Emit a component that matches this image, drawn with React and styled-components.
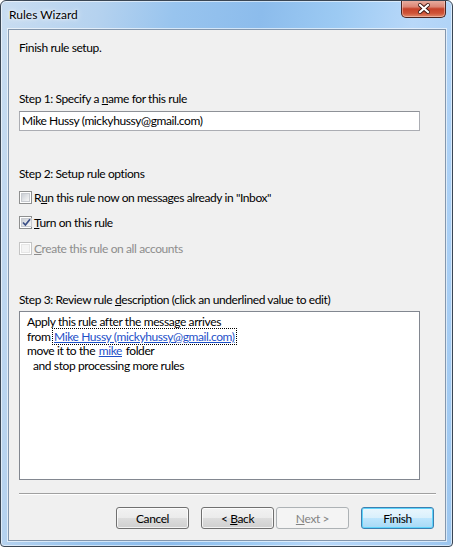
import React from "react";
import styled, { createGlobalStyle } from "styled-components";

const GlobalStyle = createGlobalStyle`
  html, body {
    margin: 0;
    padding: 0;
    background: #ffffff;
  }
  * {
    box-sizing: border-box;
  }
`;

const Window = styled.div`
  width: 453px;
  height: 547px;
  display: flex;
  flex-direction: column;
  border: 1px solid #3a4654;
  border-radius: 6px 6px 4px 4px;
  background: linear-gradient(
    100deg,
    #c9ddf1 0%,
    #b5d2ef 18%,
    #98c4ee 32%,
    #8cbcec 48%,
    #9ccaf3 62%,
    #b8d8f9 76%,
    #a9cff5 90%,
    #9cc6ef 100%
  );
  box-shadow: inset 0 0 0 1px rgba(255, 255, 255, 0.55);
  font-family: Lato, "Liberation Sans", sans-serif;
  font-size: 12px;
  letter-spacing: -0.4px;
  color: #000;
  overflow: hidden;
`;

const TitleBar = styled.div`
  height: 28px;
  flex: none;
  display: flex;
  justify-content: space-between;
  align-items: flex-start;
  padding-left: 8px;
`;

const Title = styled.div`
  line-height: 28px;
  letter-spacing: 0;
  text-shadow: 0 0 6px rgba(255, 255, 255, 0.95), 0 0 3px rgba(255, 255, 255, 0.9);
`;

const CloseButton = styled.div`
  width: 45px;
  height: 18px;
  margin-right: 6px;
  margin-top: -1px;
  display: flex;
  align-items: center;
  justify-content: center;
  border: 1px solid #4b2520;
  border-top: none;
  border-radius: 0 0 5px 5px;
  background: linear-gradient(
    #e9b1a4 0%,
    #dc8675 40%,
    #c6422a 52%,
    #cf5438 78%,
    #e08a6c 100%
  );
  box-shadow: inset 0 0 0 1px rgba(255, 220, 210, 0.45);
`;

const Client = styled.div`
  flex: 1;
  margin: 0 6px 5px 7px;
  display: flex;
  flex-direction: column;
  border: 1px solid #8497ad;
  background: #f0f0f0;
  padding: 10px 11px 0 10px;
  box-shadow: 0 0 0 1px rgba(255, 255, 255, 0.6);
`;

const Line = styled.div`
  line-height: 15px;
  height: 15px;
  white-space: nowrap;
  margin-top: ${(p) => p.$top || 0}px;
`;

const U = styled.span`
  text-decoration: underline;
`;

const TextBox = styled.div`
  margin-top: 5px;
  width: 401px;
  height: 20px;
  border: 1px solid #abadb3;
  border-top-color: #8e9197;
  background: #fff;
  padding-left: 2px;
  line-height: 18px;
  white-space: nowrap;
`;

const Options = styled.div`
  margin-top: 8px;
  display: flex;
  flex-direction: column;
  gap: 9.5px;
`;

const CheckRow = styled.div`
  height: 16px;
  display: flex;
  align-items: center;
  gap: 2px;
  color: ${(p) => (p.$disabled ? "#8d8d8d" : "#000")};
  white-space: nowrap;
`;

const Box = styled.div`
  width: 13px;
  height: 13px;
  flex: none;
  border: 1px solid ${(p) => (p.$disabled ? "#c4c4c4" : "#8e8f8f")};
  background: #fff;
  padding: 1px;
  display: flex;
`;

const BoxInner = styled.div`
  flex: 1;
  display: flex;
  align-items: center;
  justify-content: center;
  background: ${(p) =>
    p.$disabled
      ? "#f4f4f4"
      : "linear-gradient(135deg, #cbcfd5 0%, #e4e6e9 55%, #f6f6f6 100%)"};
  border: 1px solid ${(p) => (p.$disabled ? "#e6e6e6" : "#c8cbd0")};
`;

const Description = styled.div`
  margin-top: 4px;
  width: 401px;
  height: 169px;
  border: 1px solid #828790;
  background: #fff;
  padding: 3px 0 0 7px;
`;

const DescLine = styled.div`
  height: 14.7px;
  line-height: 14.7px;
  white-space: nowrap;
  padding-left: ${(p) => p.$indent || 0}px;
`;

const Link = styled.span`
  color: #1e50c8;
  text-decoration: underline;
  outline: ${(p) => (p.$focused ? "1px dotted #000" : "none")};
  outline-offset: 0;
  padding: 0 1px;
`;

const Separator = styled.div`
  margin-top: 13px;
  height: 1px;
  width: 417px;
  background: #a0a0a0;
  box-shadow: 0 1px 0 #ffffff;
`;

const ButtonRow = styled.div`
  margin-top: 13px;
  display: flex;
  justify-content: flex-end;
  align-items: center;
`;

const Button = styled.div`
  width: 73px;
  height: 22px;
  margin-left: ${(p) => p.$gap ?? 12}px;
  display: flex;
  align-items: center;
  justify-content: center;
  border-radius: 3px;
  border: 1px solid ${(p) =>
    p.$disabled ? "#adb2b5" : p.$default ? "#3c7fb1" : "#707070"};
  background: ${(p) =>
    p.$disabled
      ? "#f4f4f4"
      : p.$default
      ? "linear-gradient(#eaf6fd 0%, #d9f0fc 50%, #bee6fd 51%, #a7d9f5 100%)"
      : "linear-gradient(#f2f2f2 0%, #ebebeb 50%, #dddddd 51%, #cfcfcf 100%)"};
  box-shadow: ${(p) =>
    p.$disabled
      ? "none"
      : p.$default
      ? "inset 0 0 0 1px #5fd4fb"
      : "inset 0 0 0 1px rgba(255, 255, 255, 0.75)"};
  color: ${(p) => (p.$disabled ? "#838383" : "#000")};
  white-space: pre;
`;

function CloseGlyph() {
  return (
    <svg width="14" height="11" viewBox="0 0 14 11">
      <path
        d="M3 2 L11 9 M11 2 L3 9"
        stroke="#3d1712"
        strokeWidth="4"
        strokeLinecap="round"
        fill="none"
      />
      <path
        d="M3 2 L11 9 M11 2 L3 9"
        stroke="#ffffff"
        strokeWidth="2.2"
        strokeLinecap="square"
        fill="none"
      />
    </svg>
  );
}

function CheckBox({ checked, disabled }) {
  return (
    <Box $disabled={disabled}>
      <BoxInner $disabled={disabled}>
        {checked && (
          <svg width="9" height="9" viewBox="0 0 9 9">
            <path
              d="M1 4.5 L3.4 7 L8 1.2"
              stroke="#3b4f86"
              strokeWidth="1.7"
              fill="none"
            />
          </svg>
        )}
      </BoxInner>
    </Box>
  );
}

export default function App() {
  return (
    <>
      <GlobalStyle />
      <Window>
        <TitleBar>
          <Title>Rules Wizard</Title>
          <CloseButton>
            <CloseGlyph />
          </CloseButton>
        </TitleBar>
        <Client>
          <Line>Finish rule setup.</Line>

          <Line $top={36}>
            Step 1: Specify a <U>n</U>ame for this rule
          </Line>
          <TextBox>Mike Hussy (mickyhussy@gmail.com)</TextBox>

          <Line $top={35}>Step 2: Setup rule options</Line>
          <Options>
            <CheckRow>
              <CheckBox />
              <span>
                R<U>u</U>n this rule now on messages already in "Inbox"
              </span>
            </CheckRow>
            <CheckRow>
              <CheckBox checked />
              <span>
                <U>T</U>urn on this rule
              </span>
            </CheckRow>
            <CheckRow $disabled>
              <CheckBox disabled />
              <span>
                <U>C</U>reate this rule on all accounts
              </span>
            </CheckRow>
          </Options>

          <Line $top={36}>
            Step 3: Review rule <U>d</U>escription (click an underlined value to edit)
          </Line>
          <Description>
            <DescLine>Apply this rule after the message arrives</DescLine>
            <DescLine>
              from <Link $focused>Mike Hussy (mickyhussy@gmail.com)</Link>
            </DescLine>
            <DescLine>
              move it to the <Link>mike</Link> folder
            </DescLine>
            <DescLine $indent={6}>and stop processing more rules</DescLine>
          </Description>

          <Separator />
          <ButtonRow>
            <Button>Cancel</Button>
            <Button>
              {"< "}
              <U>B</U>ack
            </Button>
            <Button $disabled $gap={2}>
              <U>N</U>
              {"ext >"}
            </Button>
            <Button $default>Finish</Button>
          </ButtonRow>
        </Client>
      </Window>
    </>
  );
}
